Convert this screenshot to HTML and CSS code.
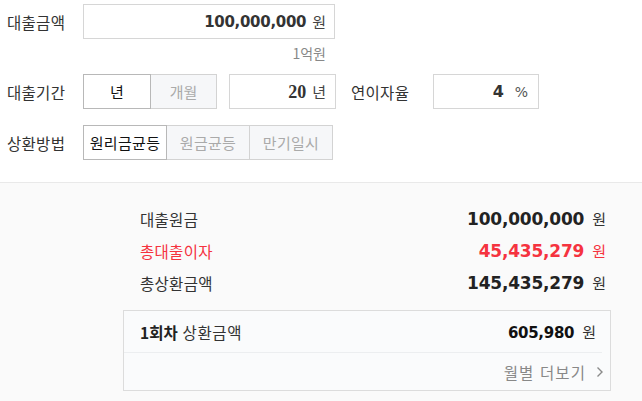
FILE: index.html
```html
<!DOCTYPE html>
<html lang="ko">
<head>
<meta charset="utf-8">
<link rel="stylesheet" href="styles.css">
</head>
<body>
<div class="calc">
  <div class="form">
    <div class="row">
      <span class="label">대출금액</span>
      <div class="field field-amount">
        <span class="num">100,000,000</span><span class="unit">원</span>
      </div>
    </div>
    <div class="note">1억원</div>
    <div class="row">
      <span class="label">대출기간</span>
      <div class="toggle">
        <span class="opt opt-year active">년</span><span class="opt opt-month">개월</span>
      </div>
      <div class="field field-term">
        <span class="num num-serif">20</span><span class="unit">년</span>
      </div>
      <span class="label label-rate">연이자율</span>
      <div class="field field-rate">
        <span class="num num-small">4</span><span class="unit unit-pct">%</span>
      </div>
    </div>
    <div class="row row-method">
      <span class="label">상환방법</span>
      <div class="toggle">
        <span class="opt opt-method active">원리금균등</span><span class="opt opt-method">원금균등</span><span class="opt opt-method">만기일시</span>
      </div>
    </div>
  </div>
  <div class="result">
    <div class="res-row">
      <span class="res-label">대출원금</span>
      <span class="res-value"><span class="res-num">100,000,000</span><span class="res-unit">원</span></span>
    </div>
    <div class="res-row red">
      <span class="res-label">총대출이자</span>
      <span class="res-value"><span class="res-num">45,435,279</span><span class="res-unit">원</span></span>
    </div>
    <div class="res-row">
      <span class="res-label">총상환금액</span>
      <span class="res-value"><span class="res-num">145,435,279</span><span class="res-unit">원</span></span>
    </div>
    <div class="box">
      <div class="box-row">
        <span class="box-label"><b>1회차</b> 상환금액</span>
        <span class="box-value"><span class="box-num">605,980</span><span class="res-unit">원</span></span>
      </div>
      <div class="box-more">
        <span>월별 더보기</span>
        <svg class="chev" width="8" height="12" viewBox="0 0 8 12"><polyline points="1.5,1.5 6,6 1.5,10.5" fill="none" stroke="#8a8a8a" stroke-width="1.4"/></svg>
      </div>
    </div>
  </div>
</div>
</body>
</html>
```

FILE: styles.css
```css
* { box-sizing: border-box; }
html, body { margin: 0; padding: 0; }
body {
  width: 642px;
  height: 401px;
  overflow: hidden;
  background: #fff;
  font-family: "Noto Sans CJK KR", "Noto Sans", sans-serif;
  font-size: 15.5px;
  color: #333;
}
.calc { display: flex; flex-direction: column; height: 401px; }
.form { padding: 4px 0 0 7px; height: 183px; border-bottom: 1px solid #e9e9e9; }
.row { display: flex; align-items: center; height: 35px; }
.row-method { margin-top: 16px; }
.label { width: 76px; line-height: 20px; letter-spacing: 0.3px; color: #333; }
.field {
  display: flex; align-items: center; justify-content: flex-end;
  height: 35px; border: 1px solid #d6d6d6; background: #fff; padding-right: 8px;
}
.field-amount { width: 252px; }
.field-term { width: 107px; margin-left: 12px; padding-right: 9px; }
.field-rate { width: 106px; padding-right: 10px; }
.label-rate { margin-left: 15px; width: 82px; }
.num {
  font-family: "DejaVu Sans", sans-serif; font-weight: bold; font-size: 15px;
  letter-spacing: -0.3px; color: #333; line-height: 20px;
}
.num-serif { font-family: "Liberation Serif", serif; font-size: 18px; letter-spacing: 0; }
.num-small { font-size: 16px; }
.unit { margin-left: 6px; font-size: 15px; color: #444; line-height: 20px; }
.unit-pct { margin-left: 11px; color: #555; font-family: "DejaVu Sans", sans-serif; font-size: 14px; }
.note {
  width: 328px; height: 35px; text-align: right; padding-right: 9px;
  font-size: 14px; color: #888; line-height: 28px;
}
.toggle { display: flex; height: 35px; }
.opt {
  display: flex; align-items: center; justify-content: center;
  height: 35px; border: 1px solid #d3d3d3; background: #f6f7f9; color: #aaa;
  line-height: 20px; margin-left: -1px; font-size: 15px;
}
.opt:first-child { margin-left: 0; }
.opt.active { background: #fff; color: #111; border-color: #b8b8b8; position: relative; z-index: 1; }
.opt-year { width: 68px; }
.opt-month { width: 67px; }
.opt-method { width: 84px; letter-spacing: 0.3px; }
.result {
  flex: 1; background: #fafafa; padding: 20px 36px 0 123px;
}
.res-row {
  display: flex; justify-content: space-between; align-items: center;
  height: 32px; padding: 0 0 0 17px;
}
.res-label { letter-spacing: 0.3px; line-height: 20px; color: #333; }
.res-value { display: flex; align-items: center; }
.res-num {
  font-family: "DejaVu Sans", sans-serif; font-weight: bold; font-size: 17px;
  letter-spacing: -0.2px; color: #222; line-height: 20px;
}
.res-unit { margin-left: 8px; font-size: 15px; color: #333; line-height: 20px; }
.red .res-label, .red .res-num, .red .res-unit { color: #f5333f; }
.box {
  margin-top: 11px; border: 1px solid #dcdcdc; background: #fafbfc;
  margin-right: -5px;
}
.box-row {
  display: flex; justify-content: space-between; align-items: center;
  height: 42px; padding: 0 6px 0 16px; border-bottom: 1px solid #eceef0; margin-right: 8px;
}
.box-label { letter-spacing: 0.6px; line-height: 20px; color: #333; }
.box-label b { color: #222; letter-spacing: 0; }
.box-num {
  font-family: "DejaVu Sans", sans-serif; font-weight: bold; font-size: 15px;
  letter-spacing: -0.3px; color: #111; line-height: 20px;
}
.box-more {
  display: flex; justify-content: flex-end; align-items: center; gap: 10px;
  height: 37px; padding-right: 6px; color: #888; letter-spacing: 1.1px; line-height: 20px;
}
.chev { display: block; }
```
